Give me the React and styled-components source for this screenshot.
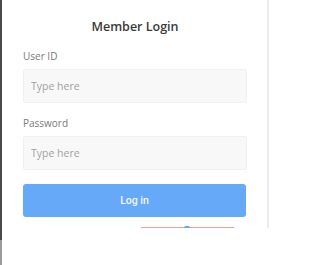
import styled, { createGlobalStyle } from 'styled-components'

const GlobalStyle = createGlobalStyle`
  html, body {
    margin: 0;
    padding: 0;
    background: #ffffff;
  }
  body {
    font-family: "Open Sans", "Noto Sans", sans-serif;
  }
`

const Page = styled.div`
  display: flex;
  width: 271px;
  height: 265px;
  overflow: hidden;
  background: #ffffff;
`

const EdgeStrip = styled.div`
  display: flex;
  flex-direction: column;
  width: 2px;
`

const EdgePart = styled.div`
  height: ${({ $h }) => $h}px;
  flex: ${({ $grow }) => ($grow ? 1 : 'none')};
  background: ${({ $tone }) => $tone};
`

const Card = styled.section`
  width: 267px;
  height: 228px;
  box-sizing: border-box;
  padding: 17px 20px 0 21px;
  border-right: 2px solid #ececec;
  display: flex;
  flex-direction: column;
`

const Title = styled.h1`
  margin: 0 0 12px;
  text-align: center;
  font-size: 12.5px;
  line-height: 20px;
  font-weight: 600;
  color: #3a3a3a;
`

const Label = styled.label`
  display: block;
  font-size: 10px;
  line-height: 14px;
  color: #7a7a7a;
  margin-bottom: 6px;
`

const Field = styled.div`
  margin-bottom: 13px;
`

const Input = styled.input`
  box-sizing: border-box;
  width: 100%;
  height: 34px;
  padding: 0 7px;
  border: 1px solid #f1f1f1;
  border-radius: 2px;
  background: #f8f8f8;
  font-family: "Open Sans", "Noto Sans", sans-serif;
  font-size: 10.5px;
  color: #555;
  outline: none;

  &::placeholder {
    color: #a2a2a2;
  }
`

const Button = styled.button`
  margin-top: 1px;
  width: 223px;
  height: 33px;
  border: none;
  border-radius: 3px;
  background: #65a9f8;
  color: #f4f8ff;
  font-family: Roboto, "Noto Sans", sans-serif;
  font-size: 10.5px;
  font-weight: 500;
`

const Underline = styled.div`
  position: relative;
  margin: 10px 0 0 118px;
  width: 93px;
  height: 1px;
  background: #e2a596;
`

const Knob = styled.span`
  position: absolute;
  left: 43px;
  top: -1px;
  width: 6px;
  height: 2px;
  border-radius: 2px 2px 0 0;
  background: #6aa3e0;
`

export default function App() {
  return (
    <>
      <GlobalStyle />
      <Page>
        <EdgeStrip>
          <EdgePart $h={240} $tone="#4a4a4a" />
          <EdgePart $grow $tone="#9a9a9a" />
        </EdgeStrip>
        <Card>
          <Title>Member Login</Title>
          <Field>
            <Label>User ID</Label>
            <Input placeholder="Type here" />
          </Field>
          <Field>
            <Label>Password</Label>
            <Input type="password" placeholder="Type here" />
          </Field>
          <Button>Log in</Button>
          <Underline>
            <Knob />
          </Underline>
        </Card>
      </Page>
    </>
  )
}
